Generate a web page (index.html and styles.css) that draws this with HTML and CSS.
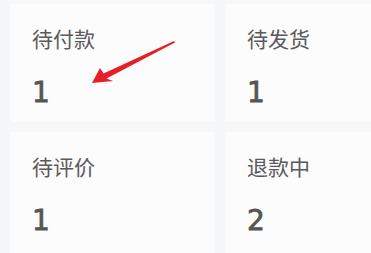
FILE: index.html
```html
<!DOCTYPE html>
<html lang="zh">
<head>
<meta charset="utf-8">
<link rel="stylesheet" href="styles.css">
</head>
<body>
<div class="grid">
  <div class="card"><div class="label">待付款</div><div class="num">1</div></div>
  <div class="card"><div class="label">待发货</div><div class="num">1</div></div>
  <div class="card"><div class="label">待评价</div><div class="num">1</div></div>
  <div class="card"><div class="label">退款中</div><div class="num">2</div></div>
</div>
<svg class="arrow" width="371" height="253" viewBox="0 0 371 253">
  <polygon points="92,83 100,68 103.5,73.5 174,41 175,42.5 106.5,78.5 113,81" fill="#e61e27"/>
</svg>
</body>
</html>
```

FILE: styles.css
```css
html, body {
  margin: 0;
  padding: 0;
}
body {
  width: 371px;
  height: 253px;
  overflow: hidden;
  background: #f6f7f9;
  position: relative;
  font-family: "Noto Sans CJK SC", "DejaVu Sans", sans-serif;
}
.grid {
  display: grid;
  grid-template-columns: 205px 146px;
  grid-template-rows: 118px 121px;
  gap: 10px;
  padding: 4px 0 0 10px;
}
.card {
  background: #fcfcfd;
  padding: 21px 0 0 22px;
  box-sizing: border-box;
}
.label {
  font-size: 21px;
  line-height: 26px;
  color: #5a5a5a;
}
.num {
  margin-top: 26px;
  font-family: "DejaVu Sans", sans-serif;
  font-size: 28px;
  line-height: 32px;
  color: #555;
  -webkit-text-stroke: 0.8px #555;
}
.arrow {
  position: absolute;
  left: 0;
  top: 0;
}
```
